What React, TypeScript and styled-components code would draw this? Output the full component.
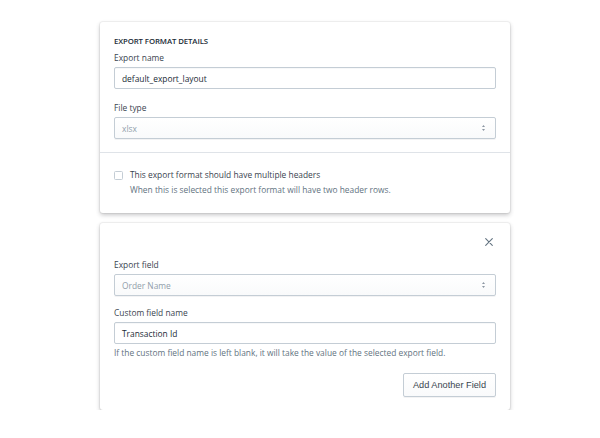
import styled, { createGlobalStyle } from 'styled-components';

const GlobalStyle = createGlobalStyle`
  body {
    margin: 0;
    background: #ffffff;
    font-family: "Open Sans", "Noto Sans", sans-serif;
    color: #212b36;
  }
`;

const SelectArrows = () => (
  <svg width="5" height="8" viewBox="0 0 5 8">
    <path d="M2.5 1 L4 3 H1 Z" fill="#8c97a3" />
    <path d="M2.5 7 L4 5 H1 Z" fill="#8c97a3" />
  </svg>
);

const CloseIcon = () => (
  <svg width="8" height="8" viewBox="0 0 8 8">
    <path d="M0.7 0.7 L7.3 7.3 M7.3 0.7 L0.7 7.3" stroke="#637381" strokeWidth="1.1" strokeLinecap="round" />
  </svg>
);

const App = () => {
  return (
    <>
      <GlobalStyle />
      <Page>
        <Card>
          <Section $gap={13} $bottom={13}>
            <Heading>EXPORT FORMAT DETAILS</Heading>
            <Field>
              <Label>Export name</Label>
              <TextInput>default_export_layout</TextInput>
            </Field>
            <Field>
              <Label>File type</Label>
              <Select>
                <span>xlsx</span>
                <SelectArrows />
              </Select>
            </Field>
          </Section>
          <Divider />
          <Section $gap={3} $bottom={17}>
            <CheckRow>
              <Checkbox />
              <span>This export format should have multiple headers</span>
            </CheckRow>
            <CheckHelp>When this is selected this export format will have two header rows.</CheckHelp>
          </Section>
        </Card>

        <Card>
          <Section $gap={11} $bottom={13}>
            <CloseRow>
              <CloseIcon />
            </CloseRow>
            <Field>
              <Label>Export field</Label>
              <Select>
                <span>Order Name</span>
                <SelectArrows />
              </Select>
            </Field>
            <Field>
              <Label>Custom field name</Label>
              <TextInput>Transaction Id</TextInput>
              <HelpText>
                If the custom field name is left blank, it will take the value of the selected export field.
              </HelpText>
            </Field>
            <Actions>
              <Button>Add Another Field</Button>
            </Actions>
          </Section>
        </Card>
      </Page>
    </>
  );
};

export default App;

const Page = styled.div`
  display: flex;
  flex-direction: column;
  gap: 10px;
  padding: 22px 0 0 100px;
`;

const Card = styled.div`
  width: 410px;
  background: #ffffff;
  border-radius: 3px;
  box-shadow: 0 0 0 1px rgba(63, 63, 68, 0.06), 0 2px 4px rgba(63, 63, 68, 0.3);
`;

const Section = styled.div<{ $gap: number; $bottom: number }>`
  display: flex;
  flex-direction: column;
  gap: ${(p) => p.$gap}px;
  padding: 14px 14px ${(p) => p.$bottom}px;
`;

const Heading = styled.div`
  font-size: 7.8px;
  font-weight: 600;
  line-height: 10px;
  margin-top: 0;
  margin-bottom: -7px;
  letter-spacing: -0.1px;
  color: #212b36;
`;

const Field = styled.div`
  display: flex;
  flex-direction: column;
  gap: 3px;
`;

const Label = styled.div`
  font-size: 8.4px;
  line-height: 12px;
  color: #3a444f;
`;

const TextInput = styled.div`
  display: flex;
  align-items: center;
  height: 22px;
  box-sizing: border-box;
  padding: 0 7px;
  border: 1px solid #c4cdd5;
  border-radius: 2px;
  font-size: 8.4px;
  color: #212b36;
  box-shadow: inset 0 1px 0 rgba(99, 115, 129, 0.05);
`;

const Select = styled.div`
  display: flex;
  align-items: center;
  justify-content: space-between;
  height: 22px;
  box-sizing: border-box;
  padding: 0 9px 0 7px;
  border: 1px solid #c4cdd5;
  border-radius: 2px;
  font-size: 8.4px;
  color: #919eab;
  background: linear-gradient(180deg, #ffffff, #f9fafb);
  box-shadow: 0 1px 0 rgba(22, 29, 37, 0.05);
`;

const Divider = styled.div`
  height: 1px;
  background: #dfe3e8;
`;

const CheckRow = styled.label`
  display: flex;
  align-items: center;
  gap: 7px;
  font-size: 8.4px;
  line-height: 12px;
  color: #3a444f;
  margin-top: 2px;
`;

const Checkbox = styled.span`
  width: 9px;
  height: 9px;
  box-sizing: border-box;
  border: 1px solid #c4cdd5;
  border-radius: 1.5px;
  background: #ffffff;
`;

const CheckHelp = styled.div`
  font-size: 8.4px;
  line-height: 12px;
  color: #637381;
  padding-left: 16px;
`;

const CloseRow = styled.div`
  display: flex;
  justify-content: flex-end;
  align-items: center;
  height: 10px;
  margin-right: 3px;
  margin-bottom: 1px;
`;

const HelpText = styled.div`
  font-size: 8.4px;
  line-height: 12px;
  color: #637381;
`;

const Actions = styled.div`
  display: flex;
  justify-content: flex-end;
  margin-top: 3px;
`;

const Button = styled.button`
  height: 24px;
  padding: 0 9px;
  border: 1px solid #c4cdd5;
  border-radius: 2px;
  background: linear-gradient(180deg, #ffffff, #f9fafb);
  box-shadow: 0 1px 0 rgba(22, 29, 37, 0.05);
  font-family: "Liberation Sans", Arial, sans-serif;
  font-size: 9.2px;
  color: #3a444f;
`;
